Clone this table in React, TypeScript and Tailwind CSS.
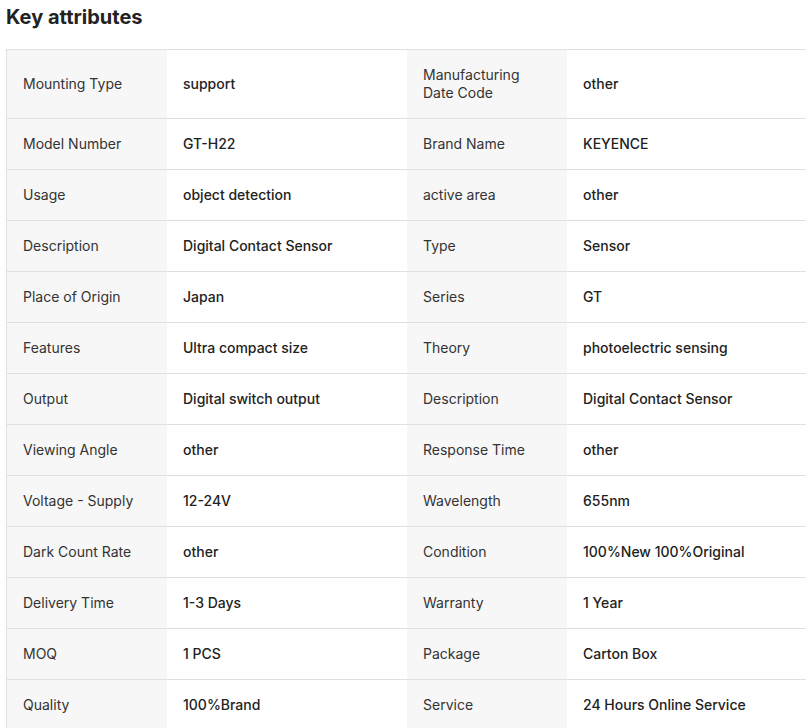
const ROWS: [string, string, string, string][] = [
  ["Mounting Type", "support", "Manufacturing Date Code", "other"],
  ["Model Number", "GT-H22", "Brand Name", "KEYENCE"],
  ["Usage", "object detection", "active area", "other"],
  ["Description", "Digital Contact Sensor", "Type", "Sensor"],
  ["Place of Origin", "Japan", "Series", "GT"],
  ["Features", "Ultra compact size", "Theory", "photoelectric sensing"],
  ["Output", "Digital switch output", "Description", "Digital Contact Sensor"],
  ["Viewing Angle", "other", "Response Time", "other"],
  ["Voltage - Supply", "12-24V", "Wavelength", "655nm"],
  ["Dark Count Rate", "other", "Condition", "100%New 100%Original"],
  ["Delivery Time", "1-3 Days", "Warranty", "1 Year"],
  ["MOQ", "1 PCS", "Package", "Carton Box"],
  ["Quality", "100%Brand", "Service", "24 Hours Online Service"],
];

function Label({ text }: { text: string }) {
  return (
    <div className="w-[160px] shrink-0 bg-[#f7f7f7] px-4 py-4 flex items-center text-[#333] font-normal">
      {text}
    </div>
  );
}

function Value({ text }: { text: string }) {
  return (
    <div className="w-[240px] shrink-0 px-4 py-4 flex items-center text-[#222] font-medium">
      {text}
    </div>
  );
}

export default function App() {
  return (
    <div
      className="w-[806px] h-[728px] overflow-hidden bg-white pl-[6px] pt-[3px]"
      style={{ fontFamily: "Inter, 'Noto Sans', sans-serif" }}
    >
      <h2 className="text-[20px] leading-[28px] font-bold text-[#222] mb-[18px]">Key attributes</h2>
      <div className="w-[802px] border-l border-t border-[#e0e0e0] text-[14px] leading-[18px]">
        {ROWS.map((r, i) => (
          <div key={i} className="flex border-b border-[#e0e0e0]">
            <Label text={r[0]} />
            <Value text={r[1]} />
            <Label text={r[2]} />
            <Value text={r[3]} />
          </div>
        ))}
      </div>
    </div>
  );
}
